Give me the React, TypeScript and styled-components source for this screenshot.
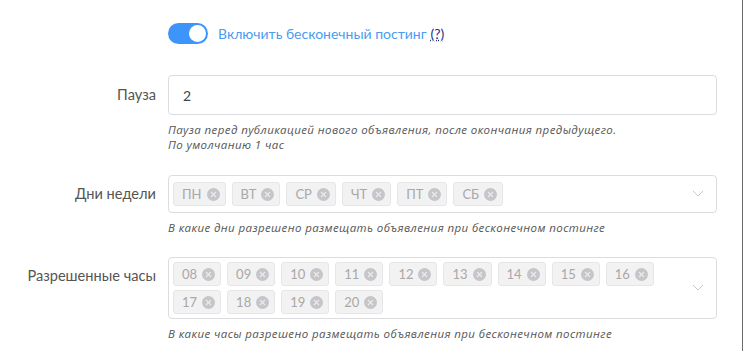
import * as React from "react";
import styled, { createGlobalStyle } from "styled-components";

const GlobalStyle = createGlobalStyle`
	html, body { margin: 0; padding: 0; background: #fff; }
	body { font-family: Lato, "Noto Sans", sans-serif; color: #333; }
	* { box-sizing: border-box; }
`;

const Page = styled.div`
	width: 743px;
	height: 351px;
	overflow: hidden;
	border-right: 1px solid #6b6b6b;
	padding-top: 23px;
`;

const Form = styled.div`
	display: grid;
	grid-template-columns: 156px 549px;
	column-gap: 12px;
	align-items: start;
`;

const Label = styled.div<{ h: number }>`
	text-align: right;
	font-size: 14.6px;
	color: #555;
	line-height: ${(p) => p.h}px;
`;

const Field = styled.div<{ mb: number }>`
	margin-bottom: ${(p) => p.mb}px;
`;

const ToggleRow = styled.label`
	display: flex;
	align-items: center;
	gap: 10px;
	height: 21px;
	margin-bottom: 31px;
	font-size: 14px;
	color: #4a9cf2;
`;

const Switch = styled.span<{ on: boolean }>`
	position: relative;
	width: 40px;
	height: 21px;
	border-radius: 11px;
	background: ${(p) => (p.on ? "#3d94fb" : "#ccc")};
	flex: none;
	&::after {
		content: "";
		position: absolute;
		top: 2px;
		left: ${(p) => (p.on ? "21px" : "2px")};
		width: 17px;
		height: 17px;
		border-radius: 50%;
		background: #fff;
	}
`;

const Hint = styled.a`
	color: #23308f;
	text-decoration: underline dotted;
	margin-left: 4px;
`;

const Input = styled.div`
	height: 40px;
	border: 1px solid #dcdce0;
	border-radius: 4px;
	padding: 0 14px;
	display: flex;
	align-items: center;
	font-size: 14px;
	color: #444;
`;

const Help = styled.div`
	margin-top: 7px;
	font-family: "Open Sans", "Noto Sans", sans-serif;
	font-size: 11.5px;
	letter-spacing: 0.4px;
	font-style: italic;
	line-height: 15px;
	color: #555;
`;

const Select = styled.div`
	min-height: 38px;
	border: 1px solid #dcdce0;
	border-radius: 4px;
	padding: 4px 40px 4px 4px;
	display: flex;
	flex-wrap: wrap;
	align-content: center;
	gap: 4px 6px;
	position: relative;
`;

const Tag = styled.span`
	height: 24px;
	display: inline-flex;
	align-items: center;
	gap: 5px;
	padding: 0 5px 0 8px;
	background: #f2f2f2;
	border: 1px solid #e6e6e6;
	border-radius: 3px;
	font-size: 13px;
	color: #a8a8a8;
`;

const Remove = styled.span`
	width: 13px;
	height: 13px;
	border-radius: 50%;
	background: #c6c6ca;
	display: inline-flex;
	align-items: center;
	justify-content: center;
`;

const Chevron = styled.span`
	position: absolute;
	right: 12px;
	top: 50%;
	margin-top: -4px;
	display: flex;
`;

const days = ["ПН", "ВТ", "СР", "ЧТ", "ПТ", "СБ"];
const hours = ["08", "09", "10", "11", "12", "13", "14", "15", "16", "17", "18", "19", "20"];

const Tags = ({ items }: { items: string[] }) => (
	<Select>
		{items.map((i) => (
			<Tag key={i}>
				{i}
				<Remove>
					<svg width="7" height="7" viewBox="0 0 7 7">
						<path d="M1 1L6 6M6 1L1 6" stroke="#ececec" strokeWidth="1.1" />
					</svg>
				</Remove>
			</Tag>
		))}
		<Chevron>
			<svg width="12" height="7" viewBox="0 0 12 7">
				<path d="M1 1L6 6L11 1" fill="none" stroke="#c8c8cc" strokeWidth="1" />
			</svg>
		</Chevron>
	</Select>
);

export default function App() {
	return (
		<Page>
			<GlobalStyle />
			<Form>
				<div />
				<ToggleRow>
					<Switch on={true} />
					<span>
						Включить бесконечный постинг<Hint href="#">(?)</Hint>
					</span>
				</ToggleRow>

				<Label h={40}>Пауза</Label>
				<Field mb={23}>
					<Input>2</Input>
					<Help>
						Пауза перед публикацией нового объявления, после окончания предыдущего.
						<br />
						По умолчанию 1 час
					</Help>
				</Field>

				<Label h={38}>Дни недели</Label>
				<Field mb={22}>
					<Tags items={days} />
					<Help>В какие дни разрешено размещать объявления при бесконечном постинге</Help>
				</Field>

				<Label h={38}>Разрешенные часы</Label>
				<Field mb={0}>
					<Tags items={hours} />
					<Help>В какие часы разрешено размещать объявления при бесконечном постинге</Help>
				</Field>
			</Form>
		</Page>
	);
}
